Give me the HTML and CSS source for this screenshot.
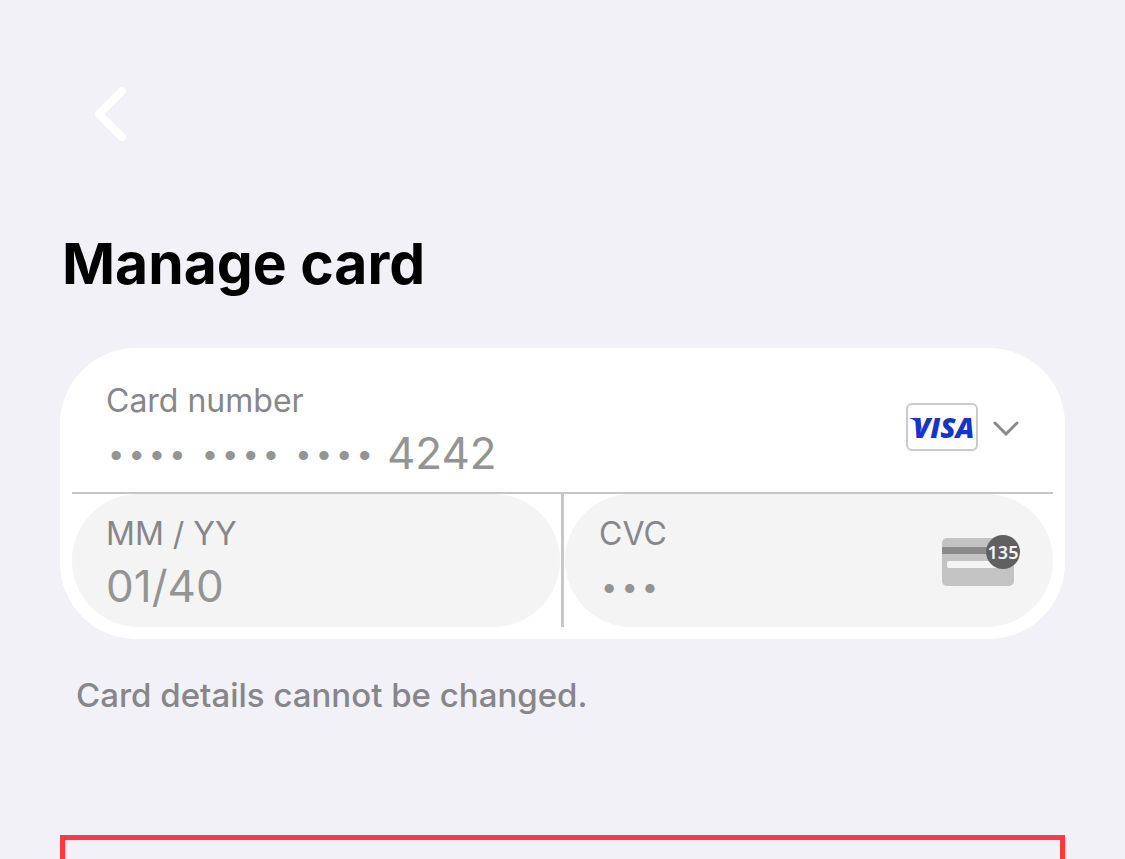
FILE: index.html
```
<!DOCTYPE html>
<html lang="en">
<head>
<meta charset="utf-8">
<meta name="viewport" content="width=device-width, initial-scale=1">
<title>Manage card</title>
<link rel="stylesheet" href="styles.css">
</head>
<body>
<main class="screen">
  <button class="back" type="button" aria-label="Back">
    <svg width="34" height="56" viewBox="0 0 34 56" aria-hidden="true"><path d="M28 5 5 28 28 51"/></svg>
  </button>
  <h1 class="title">Manage card</h1>
  <form class="card">
    <div class="number-row">
      <div class="field">
        <label for="number">Card number</label>
        <div class="masked">
          <span class="dots">••••</span>
          <span class="dots">••••</span>
          <span class="dots">••••</span>
          <input id="number" type="text" value="4242" readonly>
        </div>
      </div>
      <button class="brand" type="button" aria-label="Card brand: Visa">
        <svg class="visa" width="72" height="48" viewBox="0 0 72 48" aria-hidden="true">
          <rect x="1" y="1" width="70" height="46" rx="5"/>
          <text x="7" y="35">VISA</text>
          <path d="M3 15h11l2 13-3-6Q10 17 3 15Z"/>
        </svg>
        <svg class="chevron" width="26" height="18" viewBox="0 0 26 18" aria-hidden="true"><path d="m2 5 11 11L24 5"/></svg>
      </button>
    </div>
    <div class="detail-row">
      <div class="field pill">
        <label for="expiry">MM / YY</label>
        <input id="expiry" type="text" value="01/40" readonly>
      </div>
      <div class="field pill">
        <label for="cvc">CVC</label>
        <input id="cvc" class="dots" type="text" value="•••" readonly>
        <svg class="cvc-icon" width="80" height="52" viewBox="0 0 80 52" aria-hidden="true">
          <rect y="4" width="72" height="48" rx="5" fill="#c3c3c3"/>
          <path d="M0 13h72v7H0z" fill="#8a8a8a"/>
          <rect x="5" y="27" width="60" height="7" rx="2" fill="#f4f4f4"/>
          <circle cx="61" cy="18" r="17" fill="#606060"/>
          <text x="61" y="25">135</text>
        </svg>
      </div>
    </div>
  </form>
  <p class="note">Card details cannot be changed.</p>
  <button class="remove" type="button" aria-label="Remove card"></button>
</main>
</body>
</html>
```
FILE: styles.css
```
* { box-sizing: border-box; }

body {
  margin: 0;
  background: #f2f1f7;
  font-family: Inter, "Liberation Sans", sans-serif;
}

button {
  padding: 0;
  border: 0;
  background: none;
  font: inherit;
}

.screen {
  display: flex;
  flex-direction: column;
  height: 100vh;
  overflow: hidden;
  padding: 86px 60px 0;
}

.back {
  align-self: flex-start;
  flex: none;
  height: 56px;
  margin-left: 34px;
}

.back svg { display: block; }

.back path {
  fill: none;
  stroke: #fff;
  stroke-width: 8;
  stroke-linecap: round;
  stroke-linejoin: round;
}

.title {
  margin: 86px 2px 0;
  font-size: 57px;
  line-height: 72px;
  font-weight: 700;
  color: #000;
}

.card {
  flex: none;
  margin-top: 48px;
  padding: 0 12px 12px;
  border-radius: 76px;
  background: #fff;
}

.number-row {
  display: flex;
  align-items: center;
  height: 146px;
  padding: 14px 34px 0 0;
  border-bottom: 2px solid #c6c6c8;
}

.field {
  position: relative;
  flex: 1;
  min-width: 0;
  padding: 15px 34px 14px;
}

.field label {
  display: block;
  font-size: 32px;
  line-height: 50px;
  color: #86868b;
}

.field input {
  display: block;
  width: 100%;
  height: 54px;
  padding: 0;
  border: 0;
  outline: 0;
  background: none;
  font: inherit;
  font-size: 44px;
  color: #949494;
}

.masked {
  display: flex;
  align-items: center;
  gap: 12px;
}

.masked input {
  flex: 1;
  min-width: 0;
}

.dots,
.field .dots {
  height: 54px;
  padding-top: 10px;
  font-family: "Liberation Mono", monospace;
  font-size: 34px;
  line-height: 44px;
  color: #949494;
}

.detail-row { display: flex; }

.pill {
  height: 133px;
  border-radius: 67px;
  background: #f4f4f4;
}

.pill + .pill { margin-left: 5px; }

.pill + .pill::before {
  content: "";
  position: absolute;
  top: 0;
  bottom: 0;
  left: -4px;
  width: 3px;
  background: #c6c6cb;
}

.brand {
  display: flex;
  align-items: center;
  gap: 15px;
}

.visa rect {
  fill: #fff;
  stroke: #cbcbcb;
  stroke-width: 2;
}

.visa text {
  font: italic 800 28px "Open Sans", sans-serif;
}

.visa text,
.visa path { fill: #1434cb; }

.chevron path {
  fill: none;
  stroke: #8a8a8a;
  stroke-width: 3;
  stroke-linecap: round;
}

.cvc-icon {
  position: absolute;
  right: 31px;
  top: 40px;
}

.cvc-icon text {
  fill: #f4f4f4;
  font: 600 18px "Noto Sans", sans-serif;
  text-anchor: middle;
}

.note {
  margin: 36px 16px 0;
  font-size: 33px;
  line-height: 40px;
  font-weight: 500;
  color: #86868b;
}

.remove {
  flex: none;
  height: 160px;
  margin-top: 120px;
  border: 5px solid #ff383c;
}
```
